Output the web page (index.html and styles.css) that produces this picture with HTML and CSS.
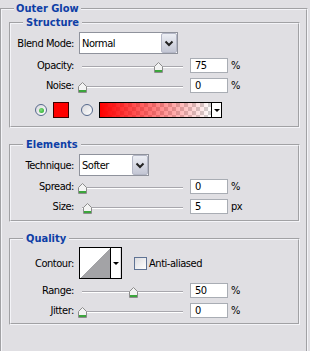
FILE: index.html
```html
<!DOCTYPE html>
<html>
<head>
<meta charset="utf-8">
<title>Outer Glow</title>
<link rel="stylesheet" href="styles.css">
</head>
<body>
<fieldset class="group outer">
  <legend class="title">Outer Glow</legend>

  <fieldset class="group sub structure">
    <legend class="title">Structure</legend>
    <div class="row row-sel">
      <span class="lbl">Blend Mode:</span>
      <div class="select select-blend">
        <span class="val">Normal</span>
        <span class="btn"><svg width="14" height="18" viewBox="0 0 14 18"><path d="M3.5 7.5 L7 11 L10.5 7.5" fill="none" stroke="#222" stroke-width="2"/></svg></span>
      </div>
    </div>
    <div class="row row-sl mt4">
      <span class="lbl">Opacity:</span>
      <div class="slider"><div class="track"><span class="thumb" style="left:75%"><svg width="9" height="11" viewBox="0 0 9 11"><path d="M0.5 10.5V4.5L4.5 0.5L8.5 4.5V10.5Z" fill="#f3f3f3" stroke="#8c8c8c"/><rect x="1" y="8" width="7" height="2" fill="#3ca53c"/></svg></span></div></div>
      <div class="num">75</div><span class="unit">%</span>
    </div>
    <div class="row row-sl mt5">
      <span class="lbl">Noise:</span>
      <div class="slider"><div class="track"><span class="thumb" style="left:0%"><svg width="9" height="11" viewBox="0 0 9 11"><path d="M0.5 10.5V4.5L4.5 0.5L8.5 4.5V10.5Z" fill="#f3f3f3" stroke="#8c8c8c"/><rect x="1" y="8" width="7" height="2" fill="#3ca53c"/></svg></span></div></div>
      <div class="num">0</div><span class="unit">%</span>
    </div>
    <div class="row row-color">
      <span class="radio on"></span>
      <span class="swatch"></span>
      <span class="radio radio2"></span>
      <div class="grad">
        <span class="grad-fill"></span>
        <span class="grad-arr"><span class="tri"></span></span>
      </div>
    </div>
  </fieldset>

  <fieldset class="group sub elements">
    <legend class="title">Elements</legend>
    <div class="row row-sel">
      <span class="lbl">Technique:</span>
      <div class="select select-tech">
        <span class="val">Softer</span>
        <span class="btn"><svg width="14" height="18" viewBox="0 0 14 18"><path d="M3.5 7.5 L7 11 L10.5 7.5" fill="none" stroke="#222" stroke-width="2"/></svg></span>
      </div>
    </div>
    <div class="row row-sl mt3">
      <span class="lbl">Spread:</span>
      <div class="slider"><div class="track"><span class="thumb" style="left:0%"><svg width="9" height="11" viewBox="0 0 9 11"><path d="M0.5 10.5V4.5L4.5 0.5L8.5 4.5V10.5Z" fill="#f3f3f3" stroke="#8c8c8c"/><rect x="1" y="8" width="7" height="2" fill="#3ca53c"/></svg></span></div></div>
      <div class="num">0</div><span class="unit">%</span>
    </div>
    <div class="row row-sl mt5">
      <span class="lbl">Size:</span>
      <div class="slider"><div class="track"><span class="thumb" style="left:5%"><svg width="9" height="11" viewBox="0 0 9 11"><path d="M0.5 10.5V4.5L4.5 0.5L8.5 4.5V10.5Z" fill="#f3f3f3" stroke="#8c8c8c"/><rect x="1" y="8" width="7" height="2" fill="#3ca53c"/></svg></span></div></div>
      <div class="num">5</div><span class="unit">px</span>
    </div>
  </fieldset>

  <fieldset class="group sub quality">
    <legend class="title">Quality</legend>
    <div class="row row-contour">
      <span class="lbl">Contour:</span>
      <div class="contour">
        <span class="curve"></span>
        <span class="c-arr"><span class="tri"></span></span>
      </div>
      <span class="check"></span>
      <span class="check-lbl">Anti-aliased</span>
    </div>
    <div class="row row-sl mt4">
      <span class="lbl">Range:</span>
      <div class="slider"><div class="track"><span class="thumb" style="left:50%"><svg width="9" height="11" viewBox="0 0 9 11"><path d="M0.5 10.5V4.5L4.5 0.5L8.5 4.5V10.5Z" fill="#f3f3f3" stroke="#8c8c8c"/><rect x="1" y="8" width="7" height="2" fill="#3ca53c"/></svg></span></div></div>
      <div class="num">50</div><span class="unit">%</span>
    </div>
    <div class="row row-sl mt5">
      <span class="lbl">Jitter:</span>
      <div class="slider"><div class="track"><span class="thumb" style="left:0%"><svg width="9" height="11" viewBox="0 0 9 11"><path d="M0.5 10.5V4.5L4.5 0.5L8.5 4.5V10.5Z" fill="#f3f3f3" stroke="#8c8c8c"/><rect x="1" y="8" width="7" height="2" fill="#3ca53c"/></svg></span></div></div>
      <div class="num">0</div><span class="unit">%</span>
    </div>
  </fieldset>
</fieldset>
</body>
</html>
```
FILE: styles.css
```css
* { box-sizing: border-box; }
html, body { margin: 0; padding: 0; }
body {
  width: 310px;
  height: 351px;
  overflow: hidden;
  background: #e0dfe3;
  color: #000;
  font-family: "DejaVu Sans Condensed", "DejaVu Sans", Tahoma, sans-serif;
  font-size: 11px;
  line-height: 13px;
  letter-spacing: -0.45px;
}

.group {
  margin: 0;
  border: 2px groove #f4f4f8;
  min-width: 0;
}
.outer {
  width: 308px;
  height: 351px;
  padding: 0 6px 0 7px;
  border-bottom-width: 0;
}
.title {
  font-weight: bold;
  color: #0e3ea6;
  letter-spacing: 0;
}
.outer > .title {
  line-height: 18px;
  margin-left: 5px;
  padding: 0 2px;
}
.sub { width: 291px; }
.sub > .title {
  line-height: 10px;
  margin-left: 12px;
  padding: 0 3px;
}
.structure { padding: 4px 0 8px 0; }
.elements { margin-top: 12px; padding: 4px 0 6px 0; }
.quality { margin-top: 12px; padding: 3px 0 5px 0; }

.row { display: flex; align-items: center; }
.row-sel { height: 22px; }
.row-sl { height: 15px; }
.row-color { height: 16px; margin-top: 9px; }
.row-contour { height: 32px; }
.mt3 { margin-top: 3px; }
.mt4 { margin-top: 4px; }
.mt5 { margin-top: 5px; }

.lbl {
  flex: none;
  width: 63px;
  text-align: right;
}

/* combo boxes */
.select {
  flex: none;
  display: flex;
  align-items: stretch;
  height: 22px;
  margin-left: 5px;
  background: #fff;
  border: 1px solid #8f929c;
}
.select-blend { width: 99px; }
.select-tech { width: 70px; }
.select .val {
  flex: 1;
  padding-left: 2px;
  display: flex;
  align-items: center;
}
.select .btn {
  flex: none;
  width: 16px;
  display: flex;
  align-items: center;
  justify-content: center;
  border: 1px solid #b4b7c6;
  border-radius: 2px;
  background: linear-gradient(#eceef4, #c3c6d4);
}

/* sliders */
.slider {
  flex: none;
  width: 109px;
  height: 15px;
  margin-left: 4px;
  padding: 8px 4px 0 4px;
}
.track {
  position: relative;
  height: 2px;
  border-top: 1px solid #a8a7ad;
  border-bottom: 1px solid #fff;
}
.thumb {
  position: absolute;
  top: -5px;
  margin-left: -4px;
  width: 9px;
  height: 11px;
  display: block;
}
.thumb svg { display: block; }

.num {
  flex: none;
  width: 38px;
  height: 15px;
  margin-left: 3px;
  padding-left: 4px;
  background: #fff;
  border: 1px solid #a9adb4;
  line-height: 13px;
}
.unit { margin-left: 3px; }

/* color row */
.radio {
  flex: none;
  width: 12px;
  height: 12px;
  border-radius: 50%;
  border: 1px solid #56698c;
  background: linear-gradient(135deg, #d8d8dc, #fff);
  display: flex;
  align-items: center;
  justify-content: center;
}
.radio.on { margin-left: 24px; }
.radio.on::after {
  content: "";
  width: 5px;
  height: 5px;
  border-radius: 50%;
  background: radial-gradient(circle at 40% 40%, #7ee07e, #21a121);
}
.radio2 { margin-left: 12px; }
.swatch {
  flex: none;
  width: 16px;
  height: 16px;
  margin-left: 6px;
  background: #ff0000;
  border: 1px solid #3a0000;
}
.grad {
  flex: none;
  display: flex;
  width: 123px;
  height: 16px;
  margin-left: 6px;
  border: 1px solid #000;
}
.grad-fill {
  flex: 1;
  background:
    linear-gradient(to right, #ff0000, rgba(255, 0, 0, 0.6) 40%, rgba(255, 0, 0, 0)),
    repeating-conic-gradient(#d2d2d2 0 25%, #fff 0 50%) 0 0 / 8px 8px;
}
.grad-arr, .c-arr {
  flex: none;
  width: 10px;
  border-left: 1px solid #000;
  background: #fff;
  display: flex;
  align-items: center;
  justify-content: center;
}
.tri {
  width: 0;
  height: 0;
  border-left: 3px solid transparent;
  border-right: 3px solid transparent;
  border-top: 3px solid #000;
}

/* contour */
.contour {
  flex: none;
  display: flex;
  width: 43px;
  height: 32px;
  margin-left: 5px;
  border: 1px solid #000;
}
.curve {
  flex: none;
  width: 30px;
  background: linear-gradient(to top left, #a3a3a6 50%, #fff 50%);
}
.check {
  flex: none;
  width: 13px;
  height: 13px;
  margin-left: 12px;
  border: 1px solid #5f7394;
  background: linear-gradient(135deg, #dcdce0, #fff);
}
.check-lbl { margin-left: 2px; }
```
